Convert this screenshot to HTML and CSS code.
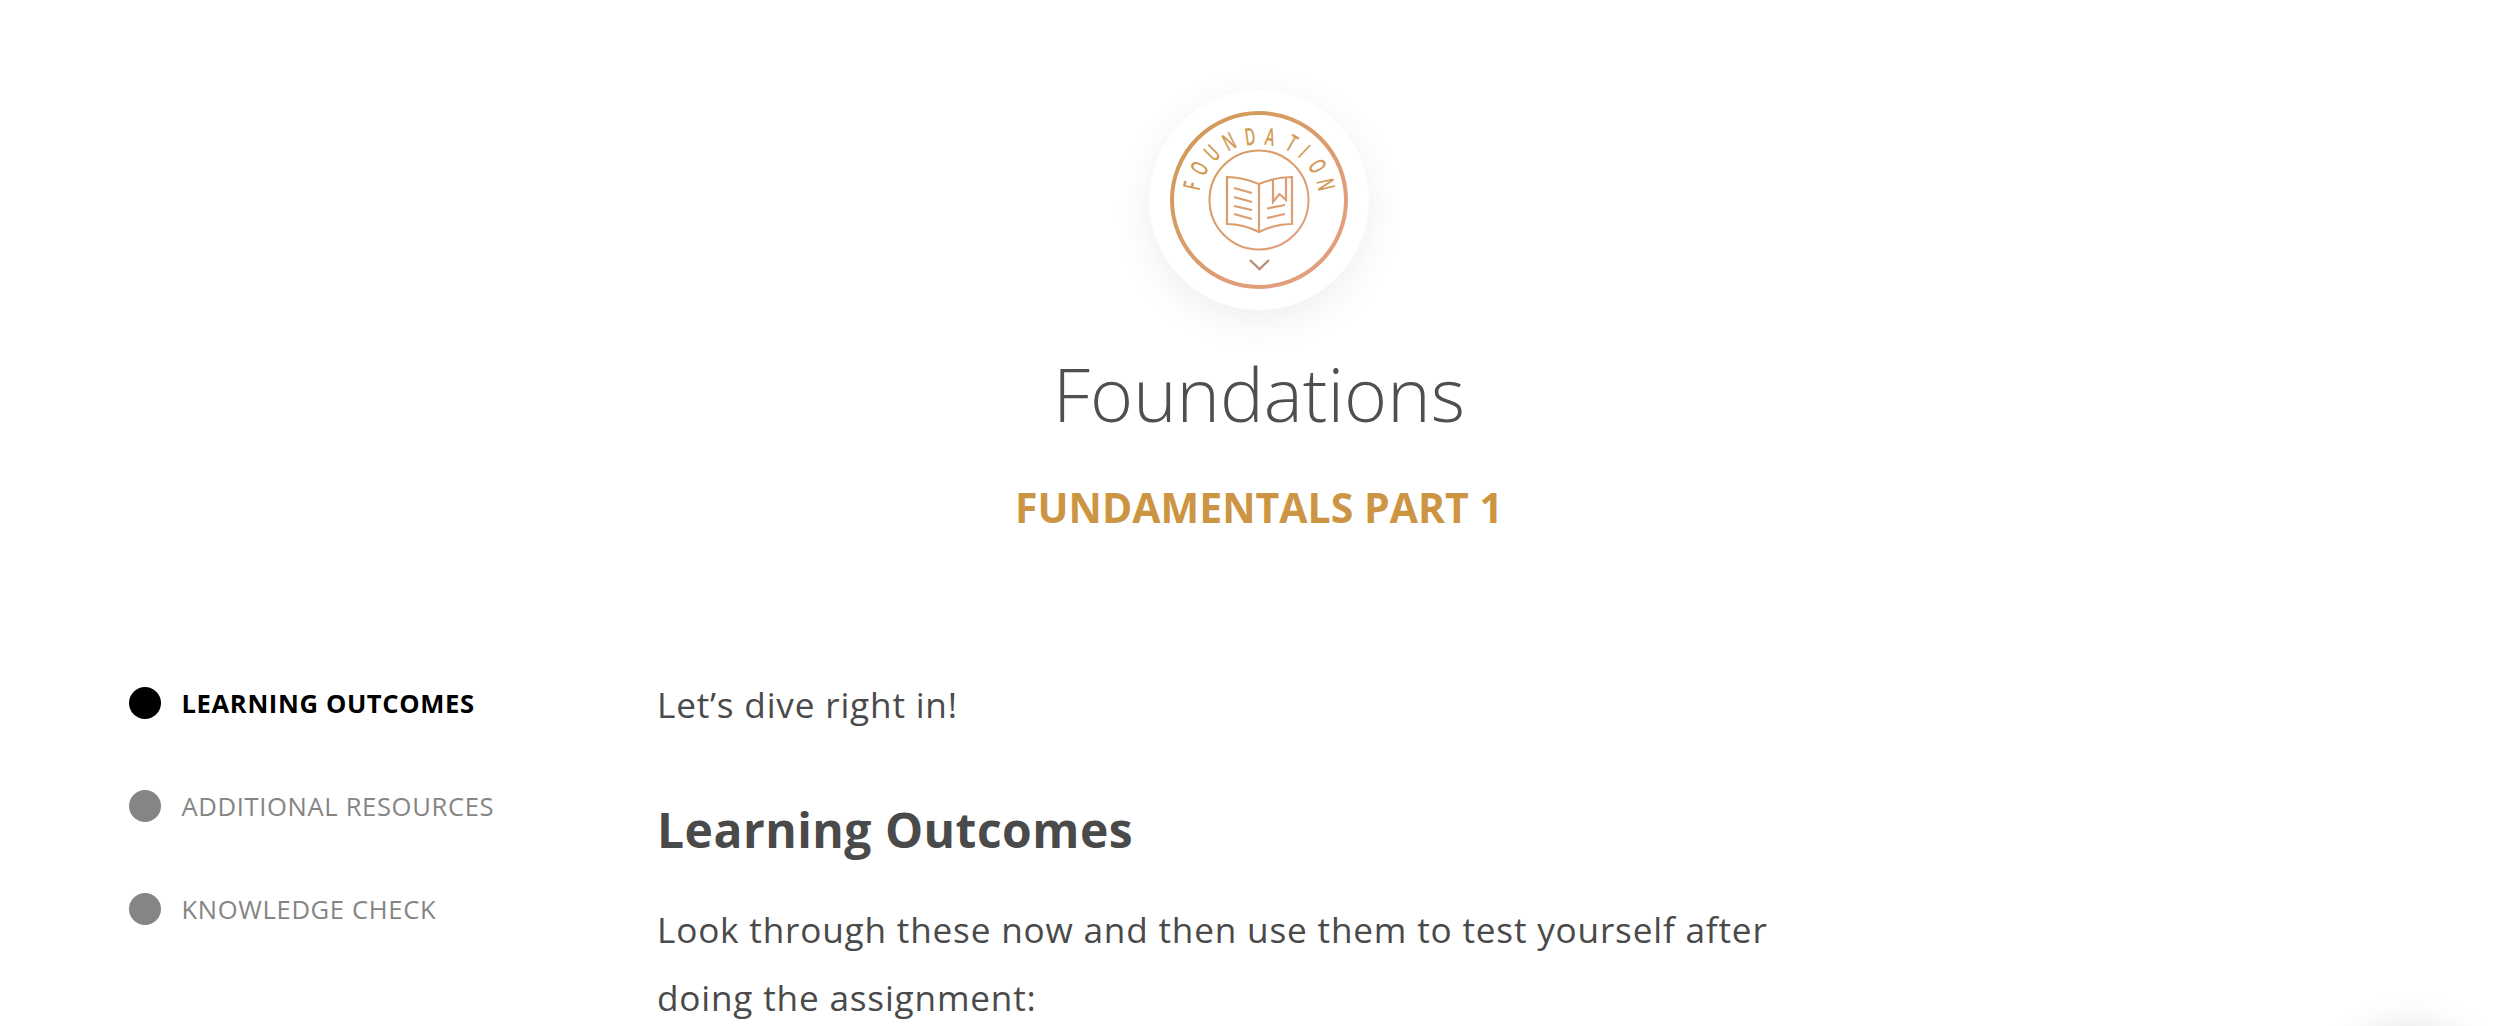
FILE: index.html
```html
<!DOCTYPE html>
<html lang="en">
<head>
<meta charset="utf-8">
<title>Foundations</title>
<link rel="stylesheet" href="styles.css">
</head>
<body>
<header class="hero">
  <div class="badge">
    <svg class="badge-art" viewBox="0 0 220 220" width="220" height="220">
      <defs>
        <linearGradient id="g" gradientUnits="userSpaceOnUse" x1="30" y1="30" x2="190" y2="190">
          <stop offset="0" stop-color="#d19a55"/>
          <stop offset="1" stop-color="#e69f84"/>
        </linearGradient>
      </defs>
      <circle class="ln" cx="110" cy="110" r="87" stroke-width="4"/>
      <circle class="ln" cx="110" cy="110" r="49.5" stroke-width="2"/>
      <g class="ln" stroke-width="2.2">
        <path d="M110 94 C100 90 90 87 78 87 V134 C90 134 100 137 110 142 C120 137 130 134 143 134 V87 C130 87 120 90 110 94 V142"/>
        <path d="M85 98 L103 103 M85 107 L103 112 M85 116 L103 120 M85 124 L103 129"/>
        <path d="M124 90 V112 L130.5 104 L137 110 V88"/>
        <path d="M118 118.5 L136 115 M118 128 L136 124"/>
      </g>
      <path d="M101 170 L110.5 179 L120 170" fill="none" stroke="#b98d7c" stroke-width="2.4"/>
      <g class="arc-text">
        <text transform="rotate(-78 110 110) translate(110 50) scale(.6 1)">F</text>
        <text transform="rotate(-62 110 110) translate(110 51) scale(.6 1)">O</text>
        <text transform="rotate(-45 110 110) translate(110 52) scale(.6 1)">U</text>
        <text transform="rotate(-27 110 110) translate(110 53) scale(.6 1)">N</text>
        <text transform="rotate(-8 110 110) translate(110 54.5) scale(.6 1)">D</text>
        <text transform="rotate(10 110 110) translate(110 54.5) scale(.6 1)">A</text>
        <text transform="rotate(30 110 110) translate(110 53) scale(.6 1)">T</text>
        <text transform="rotate(43 110 110) translate(110 52) scale(.6 1)">I</text>
        <text transform="rotate(60 110 110) translate(110 51) scale(.6 1)">O</text>
        <text transform="rotate(77 110 110) translate(110 50) scale(.6 1)">N</text>
      </g>
    </svg>
  </div>
  <h1 class="title">Foundations</h1>
  <h2 class="subtitle">FUNDAMENTALS PART 1</h2>
</header>
<div class="content">
  <nav class="toc">
    <a class="toc-item active"><span class="dot"></span>LEARNING OUTCOMES</a>
    <a class="toc-item"><span class="dot"></span>ADDITIONAL RESOURCES</a>
    <a class="toc-item"><span class="dot"></span>KNOWLEDGE CHECK</a>
  </nav>
  <main class="lesson">
    <p class="para">Let’s dive right in!</p>
    <h3 class="heading">Learning Outcomes</h3>
    <p class="para">Look through these now and then use them to test yourself after doing the assignment:</p>
  </main>
</div>
<div class="float-shadow"></div>
</body>
</html>
```
FILE: styles.css
```css
html, body {
  margin: 0;
  height: 100%;
  overflow: hidden;
  background: #fff;
}
body {
  font-family: "Open Sans", sans-serif;
  color: #4a4a4a;
}
.hero {
  display: flex;
  flex-direction: column;
  align-items: center;
  padding-top: 90px;
}
.badge {
  width: 220px;
  height: 220px;
  border-radius: 50%;
  background: #fff;
  box-shadow: 0 10px 40px rgba(0, 0, 0, 0.07);
}
.badge-art {
  display: block;
}
.ln {
  fill: none;
  stroke: url(#g);
}
.arc-text {
  font-family: "Open Sans", sans-serif;
  font-size: 24px;
  font-weight: 600;
  text-anchor: middle;
  fill: url(#g);
}
.title {
  margin: 42px 0 0;
  font-size: 73.6px;
  line-height: 84px;
  font-weight: 300;
  color: #4f4f4f;
}
.subtitle {
  margin: 43px 0 0;
  font-size: 41px;
  line-height: 56px;
  font-weight: 700;
  color: #cc9543;
}
.content {
  display: grid;
  grid-template-columns: 528px 1120px;
  padding-left: 129px;
  margin-top: 134px;
}
.toc {
  display: flex;
  flex-direction: column;
  gap: 71px;
  padding-top: 18px;
}
.toc-item {
  display: flex;
  align-items: center;
  gap: 20.5px;
  height: 32px;
  font-size: 25.6px;
  letter-spacing: 0.64px;
  color: #858585;
}
.toc-item.active {
  font-weight: 700;
  color: #000;
}
.dot {
  width: 32px;
  height: 32px;
  border-radius: 50%;
  background: #858585;
  flex: none;
}
.active .dot {
  background: #000;
}
.lesson {
  padding-top: 1px;
}
.para {
  margin: 0;
  font-size: 35.2px;
  line-height: 68px;
  letter-spacing: 0.8px;
}
.heading {
  margin: 60px 0 33px;
  font-size: 48px;
  line-height: 64px;
  font-weight: 700;
  letter-spacing: 0.48px;
}
.float-shadow {
  position: fixed;
  left: 2340px;
  top: 1030px;
  width: 140px;
  height: 140px;
  border-radius: 50%;
  background: #fff;
  box-shadow: 0 0 40px rgba(0, 0, 0, 0.14);
}
```
